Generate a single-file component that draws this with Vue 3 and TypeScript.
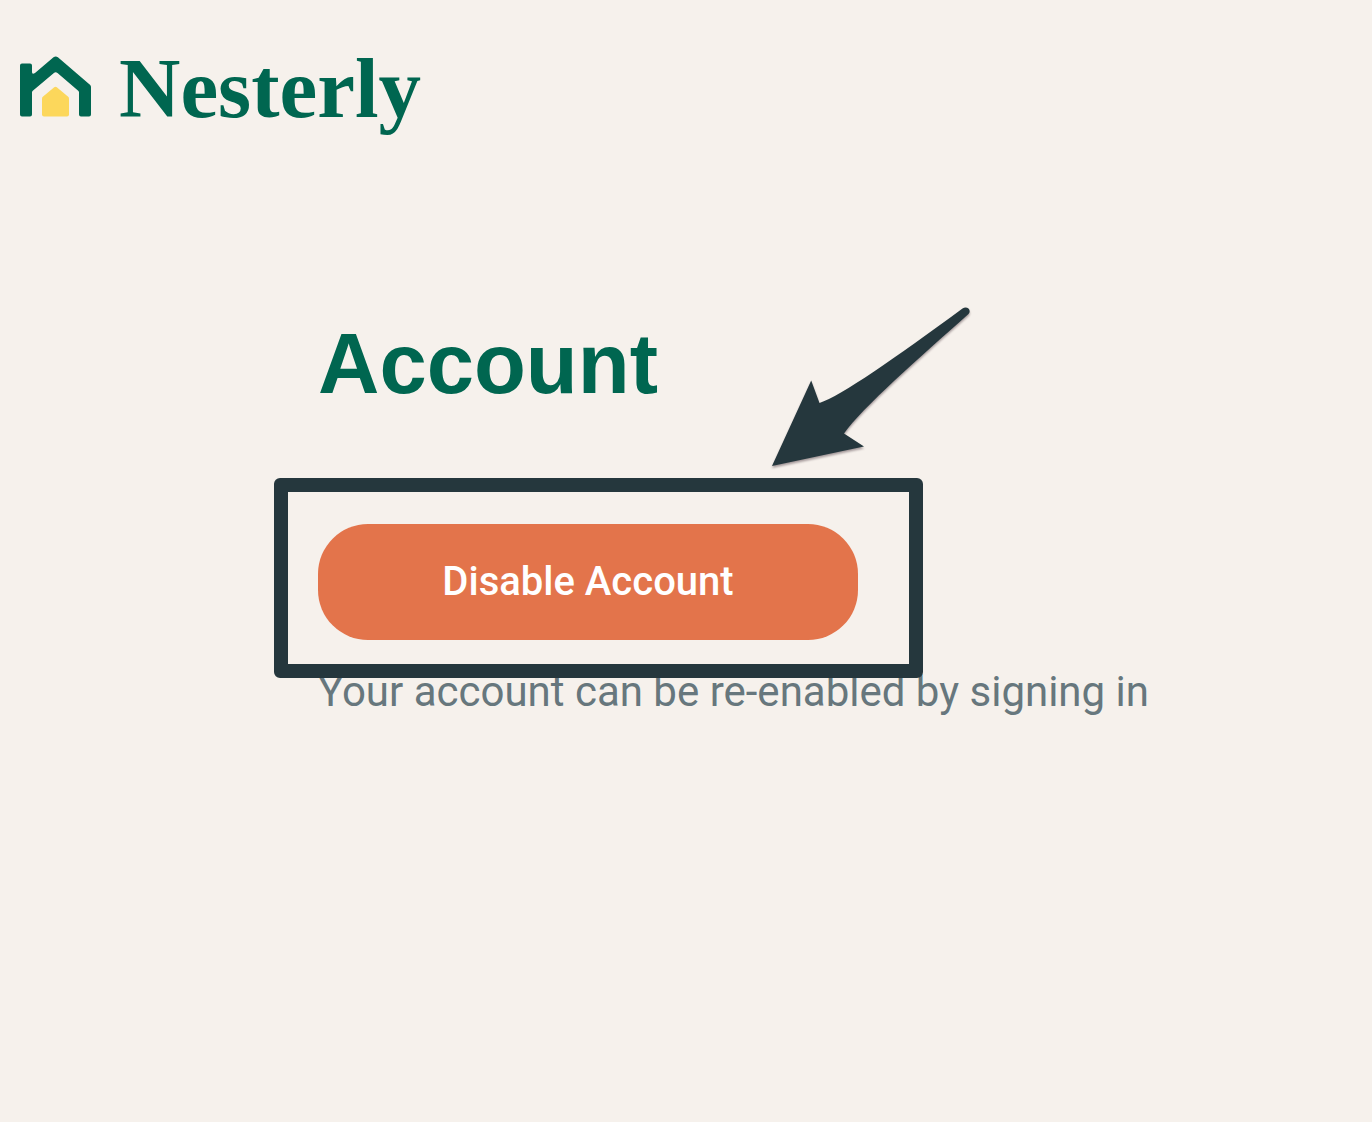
<script setup lang="ts">
import { ref } from 'vue'

const disabled = ref<boolean>(false)

function disableAccount(): void {
  disabled.value = true
}
</script>

<template>
  <div class="page">
    <header class="header">
      <a class="brand" href="#">
        <svg class="brand-icon" viewBox="0 0 72 61" aria-hidden="true">
          <path
            fill="#006650"
            d="M2 7.500H10Q12 7.500 12 9.500V16Q12 19 15 17L33.500 1.200Q35.700 -0.400 37.900 1.200L70.200 29Q71 29.800 71 31V58.500Q71 60.500 69 60.500H61Q59 60.500 59 58.500V36.500Q59 35.500 58.200 34.700L37.500 17Q35.700 15.500 33.900 17L12.800 34.700Q12 35.500 12 36.500V58.500Q12 60.500 10 60.500H2Q0 60.500 0 58.500V9.500Q0 7.500 2 7.500Z"
          />
          <path
            fill="#fcd75b"
            d="M34.200 31.200Q35.500 30.200 36.800 31.200L48.200 40.800Q49 41.500 49 42.500V58.500Q49 60.500 47 60.500H24Q22 60.500 22 58.500V42.500Q22 41.500 22.800 40.800Z"
          />
        </svg>
        <span class="brand-name">Nesterly</span>
      </a>
    </header>

    <main class="content">
      <h1 class="title">Account</h1>
      <div class="action">
        <button class="disable" type="button" @click="disableAccount">Disable Account</button>
        <div class="frame" aria-hidden="true"></div>
        <svg class="arrow" viewBox="0 0 204 166" aria-hidden="true">
          <path
            fill="#25373d"
            d="M2 162L41.200 76.500L49.500 99C71 92 125 54 192.500 4.500C197 1.500 202 6 198.500 10C150 53 92 104 74 129.500L94 142.500Z"
          />
        </svg>
      </div>
      <p class="note">Your account can be re-enabled by signing in</p>
    </main>
  </div>
</template>

<style>
body {
  margin: 0;
  background: #f6f1ec;
}
</style>

<style scoped>
.page {
  min-height: 100vh;
  background: #f6f1ec;
  font-family: Roboto, sans-serif;
}

.header {
  display: flex;
  padding: 46px 20px 0;
}

.brand {
  display: flex;
  align-items: baseline;
  gap: 27px;
  color: #006650;
  text-decoration: none;
}

.brand-icon {
  width: 72px;
  height: 61px;
}

.brand-name {
  font: bold 85px/84px 'Liberation Serif', serif;
}

.content {
  max-width: 736px;
  margin: 192px auto 0;
}

.title {
  margin: 0;
  color: #006650;
  font: bold 85px/84px 'Liberation Sans', sans-serif;
}

.action {
  position: relative;
  display: flex;
  margin-top: 118px;
}

.disable {
  width: 540px;
  height: 116px;
  padding: 0;
  border: 0;
  border-radius: 50px;
  background: #e3744b;
  color: #fff;
  font: 500 40px/48px Roboto, sans-serif;
  cursor: pointer;
}

.frame {
  position: absolute;
  top: -46px;
  left: -44px;
  width: 649px;
  height: 200px;
  box-sizing: border-box;
  border: 14px solid #25373d;
  border-radius: 6px;
  pointer-events: none;
}

.arrow {
  position: absolute;
  top: -220px;
  left: 452px;
  width: 204px;
  height: 166px;
  filter: drop-shadow(0 2px 1px rgba(40, 20, 30, 0.4));
  pointer-events: none;
}

.note {
  margin: 28px 0 0;
  color: #67777d;
  font-size: 42px;
  font-weight: 400;
  line-height: 48px;
  white-space: nowrap;
}
</style>
